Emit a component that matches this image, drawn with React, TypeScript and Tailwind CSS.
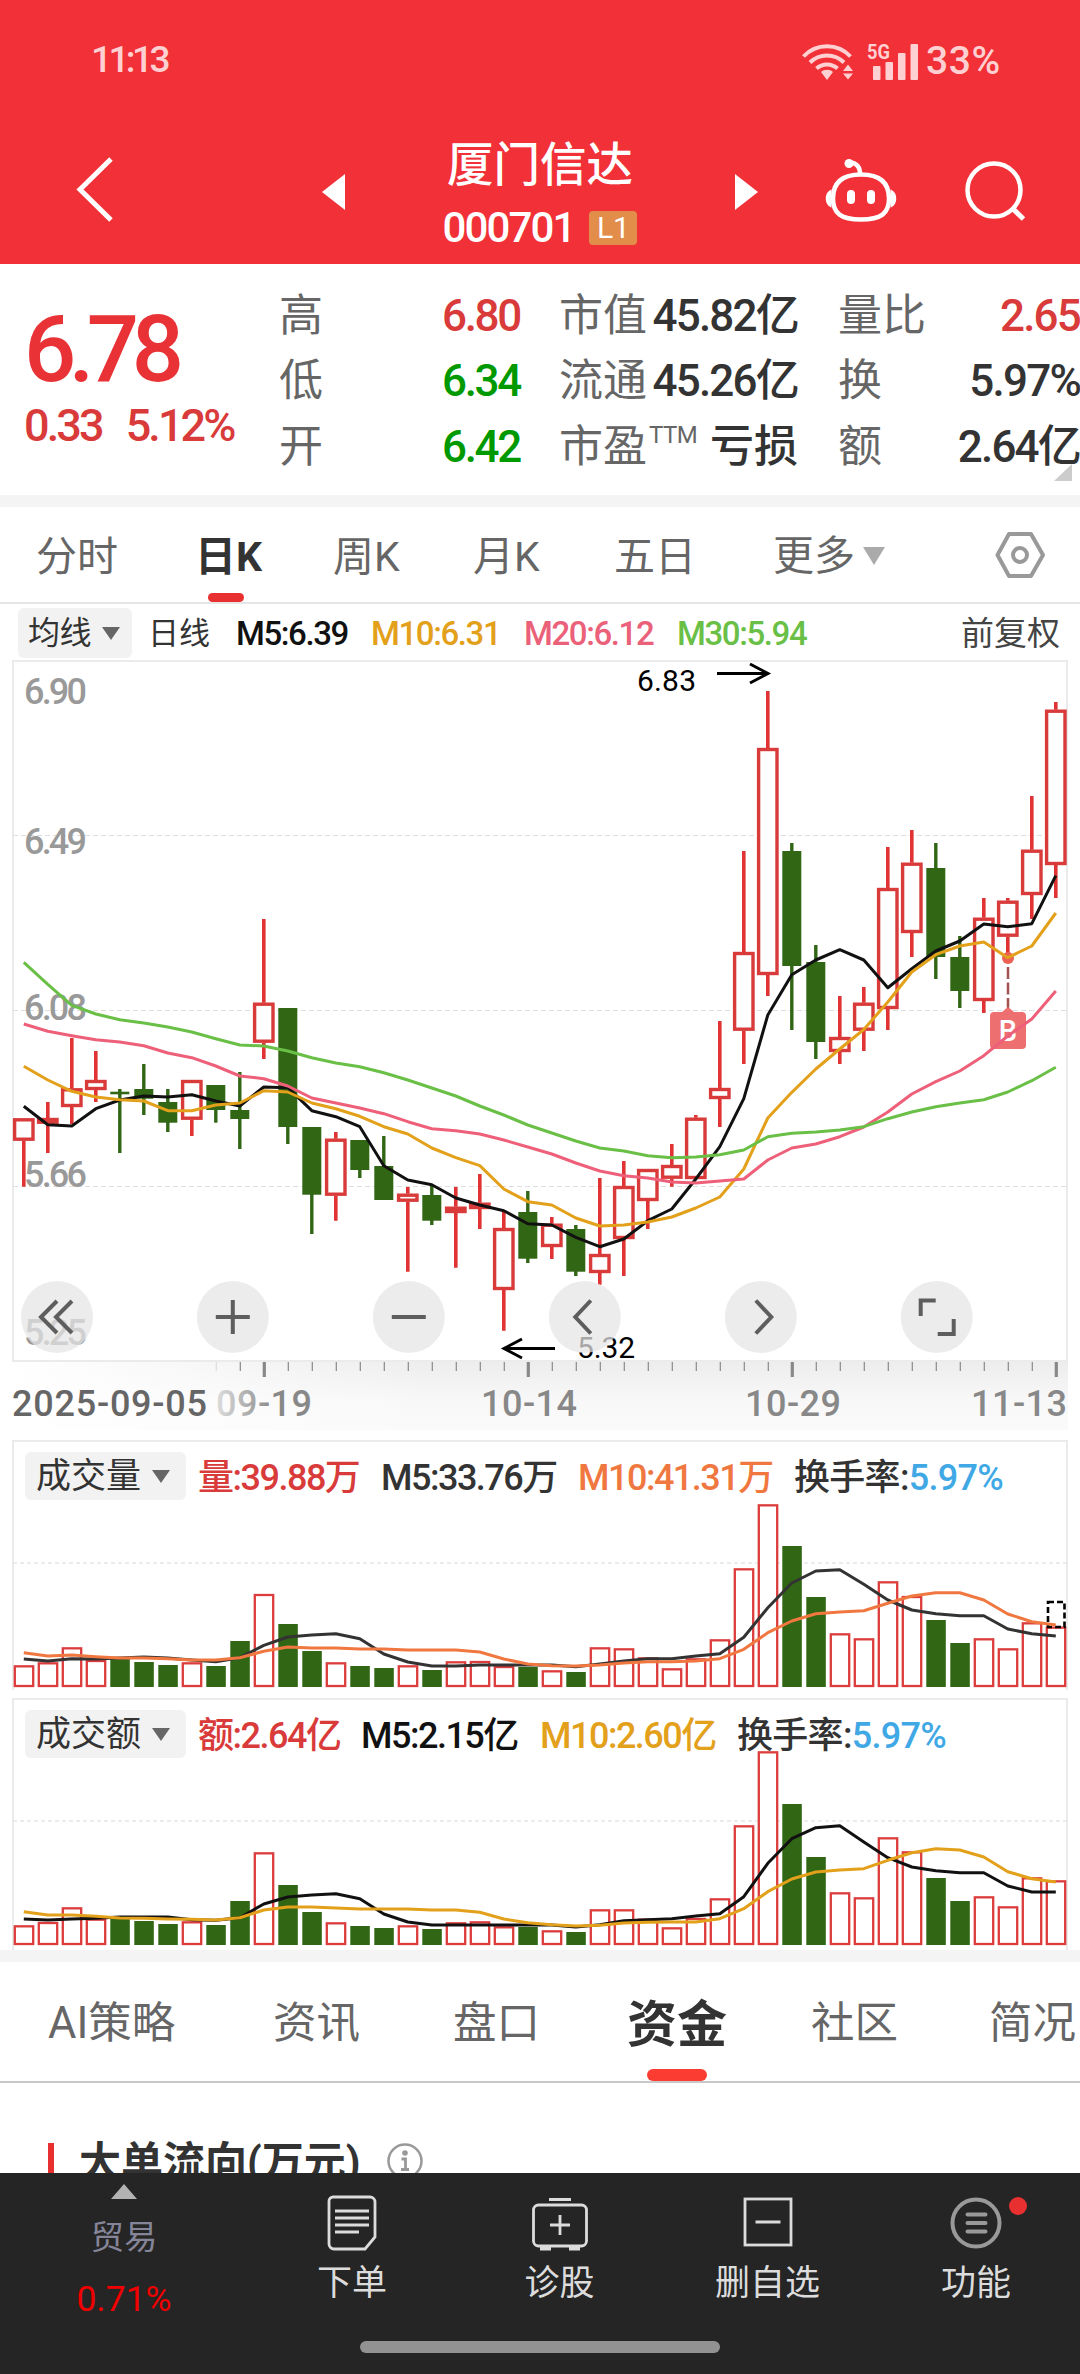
import { clsx } from "clsx";
import type { ReactNode } from "react";

const STEP = 24;
const FIRST = 23.8;
const cx = (i: number) => FIRST + i * STEP;

//up?, high, body top, body bottom, low
type Candle = [number, number, number, number, number];

const candles: Candle[] = [
  [1, 1118.3, 1118.3, 1140.7, 1186.7],
  [1, 1102, 1118, 1123.7, 1153],
  [1, 1038, 1088.3, 1107, 1124],
  [1, 1051, 1080, 1090, 1102],
  [0, 1089, 1091.7, 1094.3, 1153],
  [0, 1064, 1089, 1098.7, 1115],
  [0, 1089, 1102, 1122.7, 1132],
  [1, 1080, 1080, 1119.7, 1136],
  [0, 1085, 1085, 1110, 1122.7],
  [0, 1072, 1110, 1119, 1149],
  [1, 919, 1002.7, 1042.7, 1059],
  [0, 1008, 1008, 1127, 1144],
  [0, 1127, 1127, 1194.7, 1234],
  [1, 1132, 1138.7, 1195.7, 1220.7],
  [0, 1140, 1140, 1170, 1178],
  [0, 1136, 1166, 1200, 1200],
  [1, 1187, 1193.7, 1201.7, 1271.7],
  [0, 1185, 1195, 1220.7, 1225],
  [1, 1187, 1206.7, 1213, 1267.7],
  [1, 1174, 1202.7, 1209, 1229],
  [1, 1210, 1228, 1290, 1330.7],
  [0, 1191, 1212, 1258.7, 1263],
  [1, 1217, 1223.7, 1247, 1259],
  [0, 1225, 1229, 1271.7, 1276],
  [1, 1178, 1254, 1273, 1284.7],
  [1, 1161, 1186, 1239, 1276],
  [1, 1169, 1169, 1201, 1229],
  [1, 1144, 1165, 1178.7, 1186.7],
  [1, 1115, 1117.7, 1179, 1179],
  [1, 1021, 1088, 1099, 1127],
  [1, 851, 952, 1030.7, 1064],
  [1, 691, 748, 975, 996],
  [0, 843, 851, 966, 1030],
  [0, 945, 962, 1042, 1059],
  [1, 996, 1037, 1052, 1064],
  [1, 987, 1002.7, 1030.7, 1051],
  [1, 847, 888, 1009, 1030],
  [1, 830, 862.7, 933, 957],
  [0, 843, 868, 957, 979],
  [0, 936, 957, 991, 1008],
  [1, 898, 917.7, 1001, 1013],
  [1, 898, 900.7, 936.7, 957],
  [1, 796, 849.7, 895, 919],
  [1, 702, 709.7, 865, 898],
];

const ma5 = [
  1106.3, 1124.7, 1126, 1108.7, 1100, 1096, 1097, 1094.7, 1101, 1106, 1087,
  1087.7, 1110.7, 1116.7, 1126.7, 1165.7, 1180, 1184.7, 1198, 1205, 1210.7,
  1223.7, 1225, 1237.3, 1246.7, 1239, 1220.7, 1209, 1179, 1146.7, 1098.7, 1015,
  974.7, 960, 949.7, 960, 987.7, 968.7, 951, 941, 924, 926.7, 923.7, 875.7,
];
const ma10 = [
  1066.3, 1080, 1091.3, 1097, 1099.7, 1101, 1110.7, 1110.7, 1105, 1103, 1090.7,
  1092, 1103, 1108.7, 1116.3, 1126.7, 1134, 1148, 1157.7, 1165.7, 1189, 1201.7,
  1205, 1218, 1226, 1225, 1222, 1217, 1208, 1197, 1169, 1118, 1092.3, 1069,
  1049, 1029.5, 1002, 972, 954.7, 946, 942, 957.7, 946, 913,
];
const ma20 = [
  1024, 1031.3, 1035.7, 1039.7, 1042, 1045.7, 1053, 1057.7, 1066, 1076, 1078.7,
  1086, 1098, 1103, 1108, 1113.7, 1121.7, 1128.7, 1130.7, 1134, 1140, 1147,
  1154, 1163, 1171, 1175.7, 1178, 1182, 1183, 1181, 1179, 1160, 1148, 1144,
  1136.7, 1127, 1112, 1094, 1081.7, 1071, 1055.7, 1036, 1019, 991,
];
const ma30 = [
  962.3, 984.3, 1005.3, 1014, 1019.7, 1023, 1027, 1032, 1038.7, 1045, 1046,
  1051, 1057.7, 1063, 1066.7, 1072.7, 1080, 1088, 1096, 1106, 1115, 1125, 1133,
  1141, 1148, 1151, 1155.7, 1157.7, 1157, 1154.7, 1150, 1136.7, 1133.3, 1132,
  1130, 1126.7, 1118.7, 1112, 1106.7, 1103, 1099.7, 1092, 1080.7, 1067.3,
];

//bar tops and averages below are in thirds of a pixel from the block's top
const volume = [
  706, 697, 652, 690, 685, 696, 705, 697, 708, 633, 492, 582, 663, 697, 708,
  714, 706, 720, 694, 693, 708, 711, 721, 726, 652, 655, 682, 715, 685, 628,
  415, 223, 348, 501, 610, 625, 454, 498, 570, 639, 625, 655, 577, 590,
];
const volume5 = [
  687, 693, 686, 687, 684, 681, 684, 690, 695, 683, 646, 621, 615, 611, 626,
  672, 696, 708, 708, 705, 705, 705, 705, 710, 702, 693, 686, 686, 678, 671,
  622, 533, 459, 423, 419, 463, 510, 540, 551, 557, 557, 597, 611, 618,
];
const volume10 = [
  668, 678, 675, 680, 684, 684, 686, 690, 690, 683, 664, 651, 654, 654, 657,
  657, 660, 660, 660, 666, 687, 702, 707, 708, 705, 699, 695, 695, 693, 686,
  658, 608, 573, 551, 546, 542, 520, 498, 488, 488, 510, 552, 575, 585,
];
const amount = [
  706, 696, 652, 686, 682, 693, 702, 694, 705, 633, 487, 585, 666, 697, 708,
  714, 706, 717, 697, 694, 709, 711, 721, 726, 658, 658, 686, 712, 684, 625,
  406, 184, 342, 501, 607, 622, 442, 484, 564, 633, 619, 649, 562, 571,
];
const amount5 = [
  687, 690, 687, 685, 681, 681, 681, 689, 691, 683, 642, 621, 615, 611, 626,
  672, 696, 705, 705, 705, 705, 705, 705, 711, 704, 692, 689, 686, 678, 671,
  620, 520, 446, 413, 407, 456, 503, 531, 542, 548, 548, 588, 606, 606,
];
const amount10 = [
  665, 675, 675, 679, 684, 685, 687, 688, 690, 683, 660, 651, 651, 654, 657,
  657, 657, 660, 660, 667, 687, 698, 704, 708, 706, 699, 697, 696, 696, 686,
  656, 605, 567, 546, 540, 536, 511, 488, 476, 480, 501, 545, 566, 576,
];

const points = (ys: number[], div = 1) =>
  ys.map((y, i) => `${cx(i)},${(y / div).toFixed(1)}`).join(" ");

function Line(props: { ys: number[]; color: string; div?: number }) {
  return (
    <polyline
      points={points(props.ys, props.div)}
      fill="none"
      stroke={props.color}
      strokeWidth={3}
      strokeLinejoin="round"
    />
  );
}

function StatusBar() {
  return (
    <div className="h-[120px] flex items-start justify-between pl-[91px] pr-[76px] pt-[38px] text-[#ffd0d2] font-medium">
      <span className="text-[37px] leading-[44px] tracking-[-3.600px]">11:13</span>
      <div className="flex items-start">
        <svg width="126" height="44" viewBox="800 36 126 44" fill="none">
          <g stroke="#ffd0d2" strokeWidth="4">
            <path d="M803.5 54.500a32 32 0 0 1 47 0" />
            <path d="M810 60.500a24 24 0 0 1 34 0" />
            <path d="M816.500 66.500a15.500 15.500 0 0 1 21 0" />
          </g>
          <path
            d="M821 70c3-3 9-3 12 0l-6 8zM843 69l5-6.500 5 6.500zM843 71.500h10l-5 6z"
            fill="#ffd0d2"
          />
          <g fill="#ffd0d2">
            <rect x="873" y="64" width="7.500" height="14" rx="1" />
            <rect x="885.500" y="60" width="7.500" height="18" rx="1" />
            <rect x="898" y="51" width="7.500" height="27" rx="1" />
            <rect x="910.500" y="42" width="7.500" height="36" rx="1" />
          </g>
          <text
            x="867"
            y="57"
            fontSize="21"
            fontWeight="700"
            textLength="23"
            lengthAdjust="spacingAndGlyphs"
            fill="#ffd0d2"
          >
            5G
          </text>
        </svg>
        <span className="text-[39px] leading-[46px] tracking-[0.600px] w-[78px] whitespace-nowrap">
          33%
        </span>
      </div>
    </div>
  );
}

function TitleBar() {
  return (
    <div className="h-[144px] flex items-start text-white">
      <svg className="ml-[70px] mt-[34px]" width="48" height="72" fill="none">
        <path d="M41 5L10 35.500 41 66" stroke="#fff" strokeWidth="5" />
      </svg>
      <svg className="ml-[204px] mt-[54px]" width="23" height="36">
        <path d="M23 0v36L0 18z" fill="#fff" />
      </svg>
      <div className="w-[390px] flex flex-col items-center">
        <h1 className="mt-[17px] text-[46.500px] leading-[56px] font-medium">
          厦门信达
        </h1>
        <div className="flex items-center h-[48px] mt-[11px]">
          <span className="text-[42px] leading-none font-medium tracking-[-1.900px]">
            000701
          </span>
          <span className="ml-[15px] w-12 h-[34px] rounded bg-[#e28d49] text-[30px] leading-[34px] text-center">
            L1
          </span>
        </div>
      </div>
      <svg className="mt-[54px]" width="23" height="36">
        <path d="M0 0v36l23-18z" fill="#fff" />
      </svg>
      <svg
        className="ml-[66px] mt-[36px]"
        width="74"
        height="68"
        viewBox="0 0 74 68"
        fill="none"
        stroke="#fff"
      >
        <circle cx="25" cy="7.500" r="4.500" fill="#fff" stroke="none" />
        <path d="M25 6.500c8 0 11.500 5 11 13" strokeWidth="4.500" />
        <path
          d="M37 18.500c20 0 28 9 28 24 0 15-8 21-28 21s-28-6-28-21c0-15 8-24 28-24z"
          strokeWidth="4.500"
        />
        <path
          d="M6.500 35c-5 3-5 12 0 15zM67.500 35c5 3 5 12 0 15z"
          fill="#fff"
          strokeWidth="2"
        />
        <path d="M27 38v6M47 38v6" strokeWidth="8" strokeLinecap="round" />
      </svg>
      <svg className="ml-[67px] mt-[40px]" width="64" height="66" fill="none">
        <circle cx="29" cy="30" r="26.500" stroke="#fff" strokeWidth="4.500" />
        <path d="M47 48l11.500 11" stroke="#fff" strokeWidth="5" />
      </svg>
    </div>
  );
}

const quoteRows = [
  {
    a: ["高", "6.80", "text-[#d93a3a]"],
    b: ["市值", "", "45.82亿"],
    c: ["量比", "2.65", "text-[#d93a3a]"],
  },
  {
    a: ["低", "6.34", "text-[#009900]"],
    b: ["流通", "", "45.26亿"],
    c: ["换", "5.97%", "text-[#333]"],
  },
  {
    a: ["开", "6.42", "text-[#009900]"],
    b: ["市盈", "TTM", "亏损"],
    c: ["额", "2.64亿", "text-[#333]"],
  },
];

function Quote() {
  return (
    <div className="relative h-[231px] flex">
      <div className="w-[279px] pl-[24px] pt-[32px] text-[#e83236] whitespace-nowrap">
        <div className="text-[92px] leading-[108px] font-medium tracking-[-7.500px]">
          6.78
        </div>
        <div className="flex gap-[24px] text-[45px] leading-[44px] font-medium tracking-[-2.900px] text-[#d93a3a]">
          <span>0.33</span>
          <span>5.12%</span>
        </div>
      </div>
      <div className="flex-1 pt-[19px]">
        {quoteRows.map((r) => (
          <div
            key={r.a[0]}
            className="h-[65.500px] grid grid-cols-[241px_39px_239px_40px_242px] items-center text-[44px] leading-none text-[#333] font-medium whitespace-nowrap"
          >
            <div className="flex justify-between items-center">
              <span className="text-[#666] font-normal">{r.a[0]}</span>
              <span className={clsx("tracking-[-2.300px]", r.a[2])}>{r.a[1]}</span>
            </div>
            <div />
            <div className="flex justify-between items-center">
              <span className="text-[#666] font-normal flex">
                {r.b[0]}
                {r.b[1] && (
                  <span className="text-[24px] leading-none -mt-0.5 ml-0.5 tracking-[-0.500px]">
                    {r.b[1]}
                  </span>
                )}
              </span>
              <span className={r.b[1] ? "" : "tracking-[-1.800px]"}>{r.b[2]}</span>
            </div>
            <div />
            <div className="flex justify-between items-center">
              <span className="text-[#666] font-normal">{r.c[0]}</span>
              <span className={clsx("tracking-[-1.800px]", r.c[2])}>{r.c[1]}</span>
            </div>
          </div>
        ))}
      </div>
      <svg className="absolute right-2 bottom-[14px]" width="18" height="17">
        <path d="M18 0v17H0z" fill="#ccc" />
      </svg>
    </div>
  );
}

function PeriodTabs() {
  return (
    <div className="h-[97px] border-b-2 border-[#e6e6e6] grid grid-cols-[159px_138px_140px_141px_159px_222px_1fr] pl-[36px] text-[41px] leading-[100px] text-[#666] whitespace-nowrap">
      <span>分时</span>
      <span className="relative h-[95px] font-bold text-[#333]">
        日K
        <i className="absolute left-[13px] bottom-0 w-9 h-[9px] rounded-full bg-[#e83030]" />
      </span>
      <span>周K</span>
      <span>月K</span>
      <span>五日</span>
      <span className="flex items-center h-[97px]">
        更多
        <svg className="ml-[8px]" width="22" height="18">
          <path d="M0 0h22L11 18z" fill="#aaa" />
        </svg>
      </span>
      <svg className="mt-[23px]" width="50" height="50" fill="none">
        <path
          d="M14 4h22l12 21-12 21H14L2.500 25z"
          stroke="#999"
          strokeWidth="4"
          strokeLinejoin="round"
        />
        <circle cx="25" cy="25" r="7" stroke="#999" strokeWidth="4" />
      </svg>
    </div>
  );
}

function Picker(props: { children: ReactNode; className?: string }) {
  return (
    <div
      className={clsx(
        "flex items-center rounded-md bg-[#f2f2f2] text-[#333] whitespace-nowrap",
        props.className,
      )}
    >
      {props.children}
      <svg className="ml-[11px]" width="18" height="13">
        <path d="M0 0h18L9 13z" fill="#666" />
      </svg>
    </div>
  );
}

function AverageLegend() {
  return (
    <div className="h-[56px] grid grid-cols-[130px_88px_135px_153px_153px_1fr_101px] items-center pt-0.5 pl-[18px] pr-[18px] font-medium text-[33px] leading-none tracking-[-1.400px] whitespace-nowrap">
      <Picker className="w-[114px] h-[50px] pl-[10px] font-normal text-[32px] tracking-[-0.500px]">
        均线
      </Picker>
      <span className="text-[#333] text-[31px] font-normal tracking-normal">
        日线
      </span>
      <span className="text-[#111]">M5:6.39</span>
      <span className="text-[#e3a01b]">M10:6.31</span>
      <span className="text-[#ea6179]">M20:6.12</span>
      <span className="text-[#6abf47]">M30:5.94</span>
      <span className="text-[#444] text-[33px] font-normal tracking-normal">
        前复权
      </span>
    </div>
  );
}

const priceLabels = [
  ["6.90", 703.5],
  ["6.49", 853.5],
  ["6.08", 1019.5],
  ["5.66", 1186.5],
  ["5.25", 1344.5],
] as const;

const dateLabels = [
  ["2025-09-05", 12, 195, "#666"],
  ["09-19", 216, 96, "url(#dateFade)"],
  ["10-14", 481, 96, "#888"],
  ["10-29", 745, 96, "#888"],
  ["11-13", 971, 96, "#888"],
] as const;

const buttons = [
  { x: 57, d: "M0 -16L-16 0 0 16M15 -16L-1 0 15 16" },
  { x: 232.8, d: "M-17 0H17M0 -17V17" },
  { x: 408.8, d: "M-17 0H17" },
  { x: 584.8, d: "M6 -16.500L-9.500 0 6 16.500" },
  { x: 760.8, d: "M-5 -16.500L10.500 0 -5 16.500" },
  { x: 936.7, d: "M-1 -16.500H-16V-1M17 2V17H1" },
];

function Kline() {
  return (
    <svg
      className="block"
      width="1080"
      height="770"
      viewBox="0 660 1080 770"
      fontFamily="Roboto, sans-serif"
    >
      <defs>
        <linearGradient id="axisV" x1="0" x2="0" y1="0" y2="1">
          <stop offset="0" stopColor="#ededed" />
          <stop offset="0.5" stopColor="#f8f8f8" />
          <stop offset="1" stopColor="#fbfbfb" />
        </linearGradient>
        <linearGradient id="axisH" x1="0" x2="1" y1="0" y2="0">
          <stop offset="0" stopColor="#fff" />
          <stop offset="1" stopColor="#fff" stopOpacity="0" />
        </linearGradient>
        <linearGradient id="dateFade" x1="0" x2="1" y1="0" y2="0">
          <stop offset="0" stopColor="#ddd" />
          <stop offset="0.6" stopColor="#888" />
        </linearGradient>
      </defs>

      <rect x="12" y="1362" width="1056" height="78" fill="url(#axisV)" />
      <rect x="12" y="1362" width="420" height="78" fill="url(#axisH)" />
      <rect
        x="13"
        y="661"
        width="1054"
        height="700"
        fill="#fff"
        stroke="#ebebeb"
        strokeWidth="2"
      />
      {[835.5, 1010.5, 1186.5].map((y) => (
        <path
          key={y}
          d={`M13 ${y}H1067`}
          stroke="#dedede"
          strokeWidth="1.2"
          strokeDasharray="5 3"
        />
      ))}

      {candles.map(([up, high, top, bottom, low], i) => {
        const x = cx(i);
        if (!up)
          return (
            <g key={i} fill="#306614">
              <rect x={x - 1.7} y={high} width="3.4" height={low - high} />
              <rect x={x - 9.5} y={top} width="19" height={bottom - top} />
            </g>
          );
        return (
          <g key={i}>
            <path
              d={`M${x} ${high}V${top}M${x} ${bottom}V${low}`}
              stroke="#e03333"
              strokeWidth="3.6"
            />
            <rect
              x={x - 9.2}
              y={top + 1.5}
              width="18.4"
              height={bottom - top - 3}
              fill="#fff"
              stroke="#d93a3a"
              strokeWidth="3.4"
            />
          </g>
        );
      })}

      <g fill="#999" fontSize="36" fontWeight="500">
        {priceLabels.map(([t, y]) => (
          <text key={t} x="24" y={y} textLength="63">
            {t}
          </text>
        ))}
      </g>

      {/* buy marker */}
      <circle cx="1008" cy="958" r="6" fill="#ec6054" />
      <path
        d="M1008 967v42"
        stroke="#a35252"
        strokeWidth="2.5"
        strokeDasharray="12 3.500"
      />
      <path
        d="M1008 1007l6 5h8a4 4 0 0 1 4 4v29a4 4 0 0 1-4 4h-28a4 4 0 0 1-4-4v-29a4 4 0 0 1 4-4h8z"
        fill="#ee6f6f"
      />
      <text
        x="1008"
        y="1041"
        fontSize="29"
        fontWeight="500"
        fill="#fff"
        textAnchor="middle"
      >
        B
      </text>

      <Line ys={ma5} color="#111" />
      <Line ys={ma10} color="#e3a01b" />
      <Line ys={ma20} color="#ee6079" />
      <Line ys={ma30} color="#6abf47" />

      <g fontSize="30" fill="#000">
        <text x="637" y="691" textLength="59">
          6.83
        </text>
        <text x="577" y="1358" textLength="58">
          5.32
        </text>
      </g>
      <g stroke="#000" strokeWidth="3" fill="none">
        <path d="M717 673.500h50M750 664l18 9.500-18 9.500" />
        <path d="M555 1348.500h-50M522 1339l-18 9.500 18 9.500" />
      </g>

      {buttons.map((b) => (
        <g key={b.x} transform={`translate(${b.x} 1317)`}>
          <circle r="36" fill="#e5e5e5" fillOpacity="0.73" />
          <path d={b.d} stroke="#5e5e5e" strokeWidth="4" fill="none" />
        </g>
      ))}

      {candles.map((_, i) => {
        if (i < 8) return null;
        const major = (i - 10) % 11 === 0;
        return (
          <path
            key={i}
            d={`M${cx(i) + 0.5} 1362v${major ? 15 : 9}`}
            stroke={i === 8 ? "#ddd" : "#888"}
            strokeWidth={major ? 3.2 : 1.2}
          />
        );
      })}
      <g fontSize="36" fontWeight="500">
        {dateLabels.map(([t, x, w, fill]) => (
          <text key={t} x={x} y="1415.500" textLength={w} fill={fill}>
            {t}
          </text>
        ))}
      </g>
    </svg>
  );
}

function BarChart(props: {
  bars: number[];
  avg5: number[];
  avg10: number[];
  avg5Color: string;
  avg10Color: string;
  frameTop: number;
  gridY: number;
  base: number;
  forecast?: boolean;
  children: ReactNode;
}) {
  const { bars, frameTop, gridY, base } = props;
  return (
    <div className="relative h-[260px]">
      <svg className="absolute inset-0" width="1080" height="260">
        <path
          d={`M13 262V${frameTop}H1067V262`}
          stroke="#ebebeb"
          strokeWidth="2"
          fill="none"
        />
        <path
          d={`M13 ${gridY}H1067`}
          stroke="#e6e6e6"
          strokeWidth="1.5"
          strokeDasharray="4 3"
        />
        {bars.map((v, i) => {
          const x = cx(i);
          const top = v / 3;
          return candles[i][0] ? (
            <rect
              key={i}
              x={x - 9}
              y={top + 1}
              width="18.400"
              height={base - top - 2}
              fill="#fff"
              stroke="#dc3c3c"
              strokeWidth="2.300"
            />
          ) : (
            <rect
              key={i}
              x={x - 9.5}
              y={top}
              width="19.500"
              height={base - top}
              fill="#306614"
            />
          );
        })}
        {props.forecast && (
          <rect
            x="1048"
            y="172"
            width="16.500"
            height="25"
            fill="none"
            stroke="#000"
            strokeWidth="2.600"
            strokeDasharray="6 3"
          />
        )}
        <Line ys={props.avg5} color={props.avg5Color} div={3} />
        <Line ys={props.avg10} color={props.avg10Color} div={3} />
      </svg>
      <div className="relative flex items-center pl-[25px] font-medium text-[36px] leading-none tracking-[-1.500px] whitespace-nowrap">
        {props.children}
      </div>
    </div>
  );
}

const detailTabs = ["AI策略", "资讯", "盘口", "资金", "社区", "简况"];

function DetailTabs() {
  return (
    <div className="h-[121px] border-b-2 border-[#c8c8c8] grid grid-cols-[225px_180px_174px_184px_178px_1fr] pl-[48px] text-[43.500px] leading-[124px] text-[#666] whitespace-nowrap">
      {detailTabs.map((t) =>
        t === "资金" ? (
          <span
            key={t}
            className="relative h-[119px] font-bold text-[#333] text-[50px] leading-[126px]"
          >
            {t}
            <i className="absolute left-[20px] bottom-0 w-[60px] h-3 rounded-full bg-[#fa3c32]" />
          </span>
        ) : (
          <span key={t} className="h-[119px]">
            {t}
          </span>
        ),
      )}
    </div>
  );
}

const orderIcon = (
  <>
    <path d="M6 2h37a5 5 0 0 1 5 5v35l-10 12H7a5 5 0 0 1-5-5V6a4 4 0 0 1 4-4z" />
    <path d="M8 16h34M8 23h34M8 30h34M8 37h24" strokeWidth="2.800" />
  </>
);
const diagnoseIcon = (
  <>
    <path d="M17 4.500h22" strokeWidth="3" />
    <rect x="1.500" y="10" width="53" height="41" rx="5" />
    <path d="M28 20v20M18 30h20" />
    <path d="M8 53.500h11M37 53.500h11" strokeWidth="4" />
  </>
);
const removeIcon = (
  <>
    <rect x="2" y="4" width="46" height="46" />
    <path d="M12.500 27h25" strokeWidth="3" />
  </>
);
const menuIcon = (
  <>
    <circle cx="26" cy="28" r="23.500" strokeWidth="4" />
    <path
      d="M17.500 19.500h18M17.500 28h18M17.500 36.500h18"
      strokeWidth="4"
      strokeLinecap="round"
    />
  </>
);

function NavItem(props: {
  label: string;
  icon: ReactNode;
  width: number;
  dim?: boolean;
  dot?: boolean;
}) {
  return (
    <div className="relative flex flex-col items-center pt-[22px] text-[#dcdcdc]">
      <svg
        width={props.width}
        height="56"
        fill="none"
        stroke={props.dim ? "#999" : "#dcdcdc"}
        strokeWidth="2.800"
      >
        {props.icon}
      </svg>
      <span className="mt-[12px] text-[35px] leading-[42px]">{props.label}</span>
      {props.dot && (
        <i className="absolute right-[53px] top-[24px] size-[18px] rounded-full bg-[#e83030]" />
      )}
    </div>
  );
}

function BottomBar() {
  return (
    <div className="h-[201px] bg-[#252525] relative z-10">
      <div className="grid grid-cols-[248px_208px_207px_209px_208px]">
        <div className="flex flex-col items-center pt-[11px] h-[160px]">
          <svg width="26" height="15">
            <path d="M13 0l13 15H0z" fill="#b3b3b3" />
          </svg>
          <span className="mt-[17px] text-[33.500px] leading-[44px] text-[#85859a]">
            贸易
          </span>
          <span className="mt-[17px] text-[35.500px] leading-[44px] text-[#f00000]">
            0.71%
          </span>
        </div>
        <NavItem label="下单" icon={orderIcon} width={50} />
        <NavItem label="诊股" icon={diagnoseIcon} width={56} />
        <NavItem label="删自选" icon={removeIcon} width={50} />
        <NavItem label="功能" icon={menuIcon} width={52} dim dot />
      </div>
      <div className="mx-auto mt-[8px] w-[360px] h-3 rounded-full bg-[#929292]" />
    </div>
  );
}

export default function App() {
  return (
    <div className="w-[1080px] h-[2374px] overflow-hidden bg-white flex flex-col font-[Roboto,'Noto_Sans_CJK_SC',sans-serif]">
      <header className="h-[264px] shrink-0 bg-[#f13037]">
        <StatusBar />
        <TitleBar />
      </header>
      <Quote />
      <div className="h-3 shrink-0 bg-[#f4f4f4]" />
      <PeriodTabs />
      <AverageLegend />
      <Kline />

      <BarChart
        bars={volume}
        avg5={volume5}
        avg10={volume10}
        avg5Color="#333"
        avg10Color="#f07840"
        frameTop={11}
        gridY={133}
        base={257}
        forecast
      >
        <Picker className="mt-[22px] w-[161px] h-12 pl-[11px] text-[35px] font-normal tracking-normal">
          成交量
        </Picker>
        <div className="mt-[25px] ml-[12px] grid grid-cols-[183px_197px_216px_auto]">
          <span className="text-[#d93a3a]">量:39.88万</span>
          <span className="text-[#333]">M5:33.76万</span>
          <span className="text-[#f07840]">M10:41.31万</span>
          <span className="text-[#333] tracking-[-0.700px]">
            换手率:<b className="font-medium text-[#41a8e6]">5.97%</b>
          </span>
        </div>
      </BarChart>
      <BarChart
        bars={amount}
        avg5={amount5}
        avg10={amount10}
        avg5Color="#111"
        avg10Color="#e3a01b"
        frameTop={9}
        gridY={131}
        base={255}
      >
        <Picker className="mt-[20px] w-[161px] h-12 pl-[11px] text-[35px] font-normal tracking-normal">
          成交额
        </Picker>
        <div className="mt-[23px] ml-[12px] grid grid-cols-[163px_179px_197px_auto]">
          <span className="text-[#d93a3a]">额:2.64亿</span>
          <span className="text-[#111]">M5:2.15亿</span>
          <span className="text-[#e3a01b]">M10:2.60亿</span>
          <span className="text-[#333] tracking-[-0.700px]">
            换手率:<b className="font-medium text-[#41a8e6]">5.97%</b>
          </span>
        </div>
      </BarChart>

      <div className="h-3 shrink-0 bg-[#f4f4f4]" />
      <DetailTabs />
      <section className="h-[90px] shrink-0 overflow-hidden pl-[48px] pt-[50px] flex items-start">
        <i className="mt-[10px] w-1.5 h-9 shrink-0 bg-[#e83030]" />
        <h2 className="ml-[25px] text-[42px] leading-[60px] font-bold text-[#333] whitespace-nowrap">
          大单流向(万元)
        </h2>
        <svg
          className="ml-[26px] mt-[9px] shrink-0"
          width="38"
          height="38"
          fill="none"
          stroke="#999"
        >
          <circle cx="19" cy="19" r="16.500" strokeWidth="2.500" />
          <circle cx="19" cy="11" r="2.800" fill="#999" stroke="none" />
          <path d="M15.500 17h4v10M15 27.500h8" strokeWidth="2.800" />
        </svg>
      </section>
      <BottomBar />
    </div>
  );
}
